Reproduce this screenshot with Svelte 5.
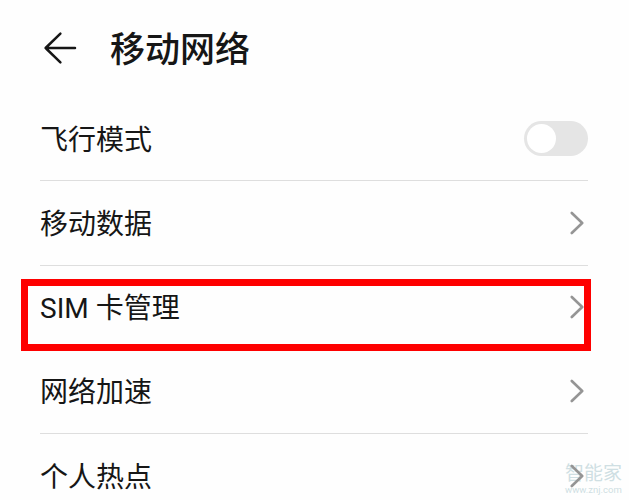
<script lang="ts">
  const rows = [
    { label: "飞行模式", toggle: true },
    { label: "移动数据" },
    { label: "SIM 卡管理", marked: true },
    { label: "网络加速" },
    { label: "个人热点" },
  ];
  let airplane = $state(false);
</script>

<div class="screen">
  <header>
    <svg class="back" width="34" height="34" viewBox="0 0 34 34">
      <path d="M17.4 2.6 L2.6 17 L17.4 31.4 M2.6 17 H32" />
    </svg>
    <h1>移动网络</h1>
  </header>

  <div class="list">
    {#each rows as row}
      <div class="row">
        <span class="label">{row.label}</span>
        {#if row.toggle}
          <button class="switch" class:on={airplane} aria-label={row.label} onclick={() => (airplane = !airplane)}>
            <span class="knob"></span>
          </button>
        {:else}
          <svg class="chevron" width="16" height="24" viewBox="0 0 16 24">
            <path d="M1.8 2 L12.2 12 L1.8 22" />
          </svg>
        {/if}
        {#if row.marked}
          <div class="mark"></div>
        {/if}
      </div>
    {/each}
  </div>

  <div class="watermark">
    <div class="name">智能家</div>
    <div class="site">www.znj.com</div>
  </div>
</div>

<style>
  :global(body) {
    background: #fefefe;
  }
  .screen {
    position: relative;
    box-sizing: border-box;
    width: 629px;
    height: 500px;
    padding: 0 41px 0 40px;
    overflow: hidden;
    color: #161616;
    font-family: Roboto, "Noto Sans CJK SC", sans-serif;
  }
  header {
    display: flex;
    align-items: center;
    gap: 33px;
    box-sizing: border-box;
    height: 97px;
    padding: 0 0 2px 3px;
  }
  h1 {
    margin: 0;
    padding-top: 7px;
    font-size: 35px;
    line-height: 48px;
    font-weight: 500;
  }
  .back path {
    fill: none;
    stroke: #161616;
    stroke-width: 2.5;
    stroke-linecap: round;
    stroke-linejoin: round;
  }
  .row {
    position: relative;
    display: flex;
    align-items: center;
    justify-content: space-between;
    box-sizing: border-box;
    height: 84.25px;
    border-bottom: 1px solid #dedede;
  }
  .label {
    padding-top: 4px;
    font-size: 28px;
    line-height: 40px;
    white-space: nowrap;
  }
  .switch {
    box-sizing: border-box;
    width: 64px;
    height: 35px;
    padding: 3px;
    border: 0;
    border-radius: 18px;
    background: #e5e5e5;
  }
  .switch.on {
    background: #0a7dff;
  }
  .knob {
    display: block;
    width: 29px;
    height: 29px;
    border-radius: 50%;
    background: #fff;
  }
  .on .knob {
    margin-left: auto;
  }
  .chevron {
    margin-right: 2.5px;
  }
  .chevron path {
    fill: none;
    stroke: #959595;
    stroke-width: 2.6;
    stroke-linecap: round;
    stroke-linejoin: round;
  }
  .mark {
    position: absolute;
    top: 13px;
    left: -19px;
    box-sizing: border-box;
    width: 570px;
    height: 72px;
    border: 7px solid #fe0000;
  }
  .watermark {
    position: absolute;
    left: 565px;
    top: 464px;
    z-index: -1;
    color: #cfdfe3;
  }
  .name {
    font-size: 19px;
    line-height: 20px;
  }
  .site {
    font-size: 9.5px;
    line-height: 11px;
  }
</style>
